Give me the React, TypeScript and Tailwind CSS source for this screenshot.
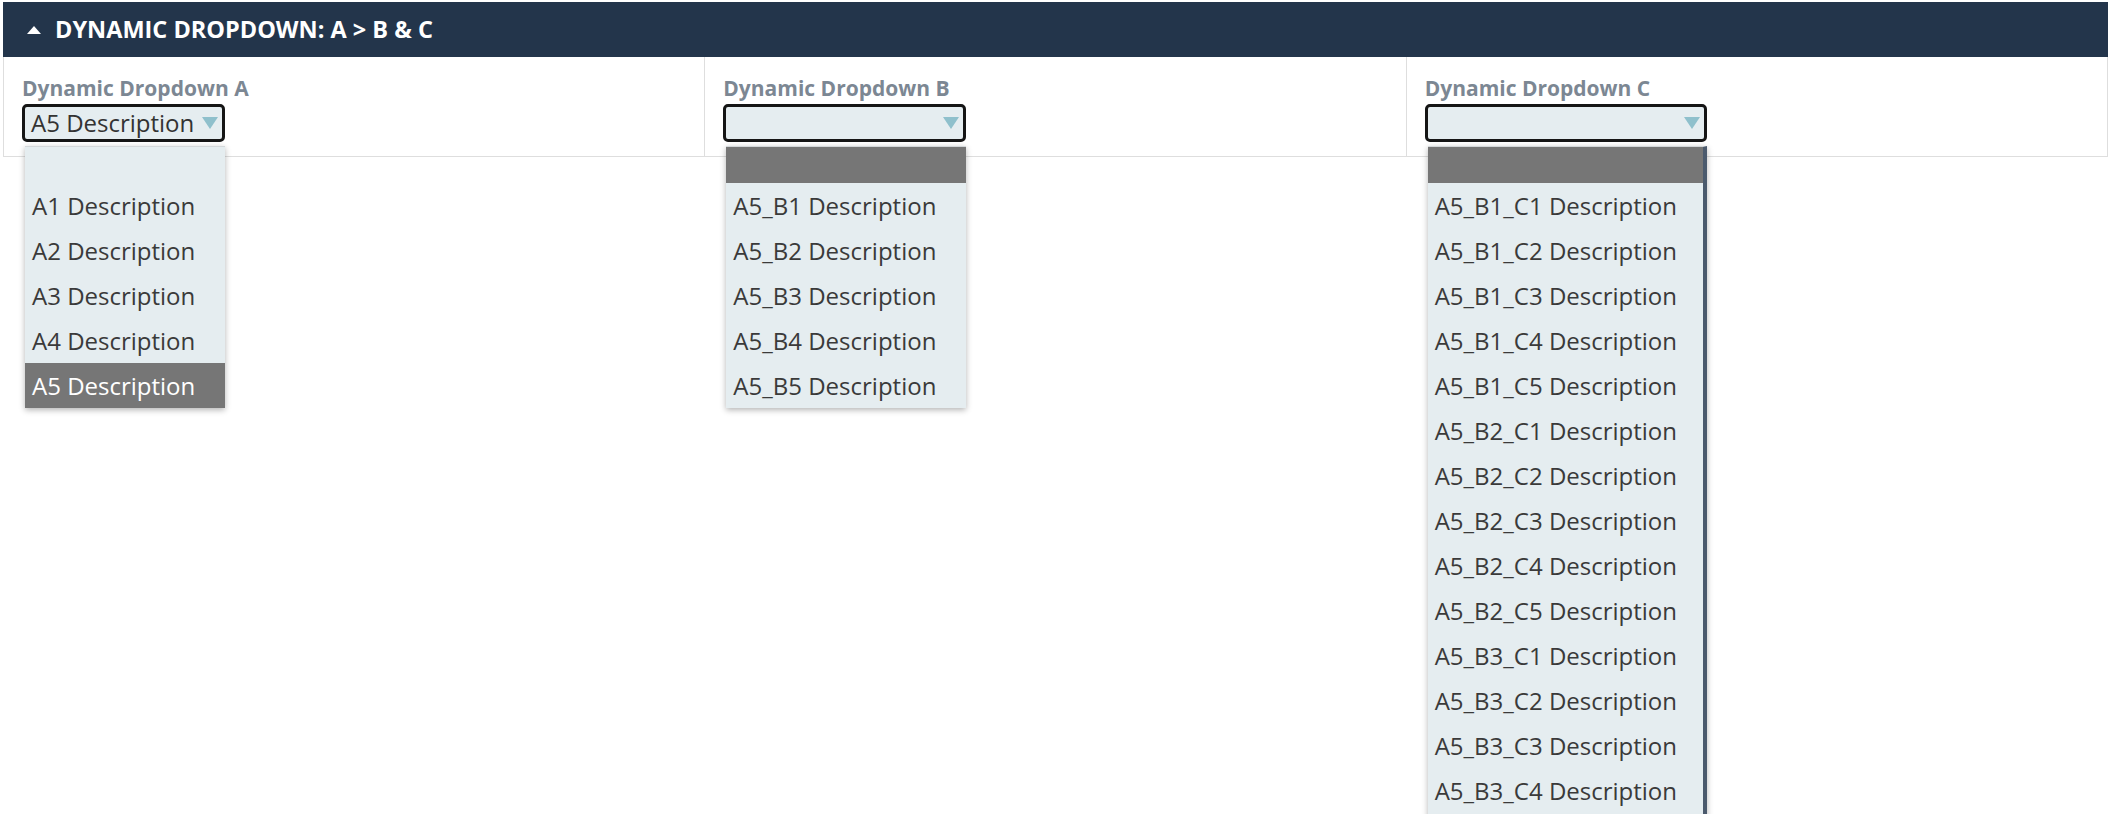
import React from "react";

const optsA = ["", "A1 Description", "A2 Description", "A3 Description", "A4 Description", "A5 Description"];
const optsB = ["", "A5_B1 Description", "A5_B2 Description", "A5_B3 Description", "A5_B4 Description", "A5_B5 Description"];
const optsC = [""];
for (let b = 1; b <= 3; b++) {
  for (let c = 1; c <= 5; c++) {
    if (b === 3 && c === 5) break;
    optsC.push(`A5_B${b}_C${c} Description`);
  }
}

const Arrow = () => (
  <svg width="16" height="12" viewBox="0 0 16 12" className="shrink-0">
    <polygon points="0,0 16,0 8,12" fill="#8fc0cc" />
  </svg>
);

type DropProps = {
  label: string;
  value: string;
  options: string[];
  selected: number;
  selectW: string;
  scroll?: boolean;
  border?: boolean;
};

const Dropdown = ({ label, value, options, selected, selectW, scroll, border }: DropProps) => {
  return (
    <div className={`flex-1 pl-[18px] pt-[19px] pb-[14px] ${border ? "border-l border-[#dedede]" : ""}`}>
      <div className="text-[21px] leading-[24px] font-bold text-[#7c8793]">{label}</div>
      <div className={`relative mt-[4px] ${selectW}`}>
        {/* the closed select */}
        <div className="h-[38px] border-[3px] border-[#151515] rounded-[5px] bg-[#e5edf0] flex items-center justify-between pl-[6px] pr-[4px]">
          <span className="text-[24px] leading-none text-[#333]">{value}</span>
          <Arrow />
        </div>
        {/* open list */}
        <div
          className={`absolute top-[42px] left-[3px] right-0 bg-[#e5edf0] shadow-[0_2px_6px_rgba(0,0,0,0.3)] border-t border-[#d4d8da] z-10 ${
            scroll ? "border-r-[4px] border-r-[#4b5a6d] pb-[60px]" : ""
          }`}
        >
          {options.map((o, i) =>
            o === "" ? (
              <div key={i} className={`h-[36px] ${i === selected ? "bg-[#767676]" : ""}`} />
            ) : (
              <div
                key={i}
                className={`px-[7px] py-[6px] text-[24px] leading-[33px] whitespace-nowrap ${
                  i === selected ? "bg-[#767676] text-white" : "text-[#3a3a3a]"
                }`}
              >
                {o}
              </div>
            )
          )}
        </div>
      </div>
    </div>
  );
};

export default function App() {
  return (
    <div className="h-screen overflow-hidden bg-white pt-[2px] pl-[3px] pr-[4px]" style={{ fontFamily: '"Open Sans", sans-serif' }}>
      <div className="bg-white border border-t-0 border-[#dedede]">
        <div className="h-[55px] bg-[#23354b] flex items-center pl-[24px] -mx-px">
          <svg width="14" height="8" viewBox="0 0 14 8" className="mr-[14px]">
            <polygon points="0,8 14,8 7,0" fill="#ffffff" />
          </svg>
          <span className="text-white text-[23.5px] font-bold">DYNAMIC DROPDOWN: A &gt; B &amp; C</span>
        </div>
        <div className="flex">
          <Dropdown label="Dynamic Dropdown A" value="A5 Description" options={optsA} selected={5} selectW="w-[203px]" />
          <Dropdown label="Dynamic Dropdown B" value="" options={optsB} selected={0} selectW="w-[243px]" border />
          <Dropdown label="Dynamic Dropdown C" value="" options={optsC} selected={0} selectW="w-[282px]" border scroll />
        </div>
      </div>
    </div>
  );
}
